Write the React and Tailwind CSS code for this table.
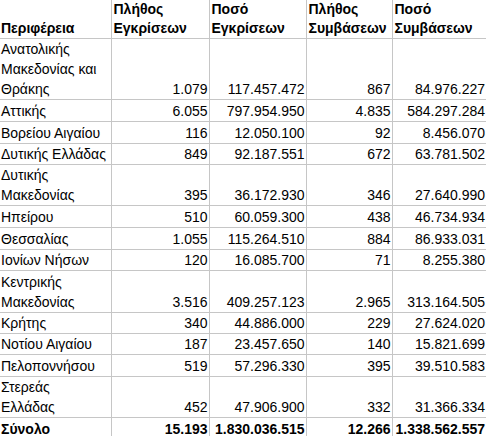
const rows = [
  { name: ['Ανατολικής', 'Μακεδονίας και', 'Θράκης'], h: 'h-[60px]', v: ['1.079', '117.457.472', '867', '84.976.227'] },
  { name: ['Αττικής'], h: 'h-[22px]', v: ['6.055', '797.954.950', '4.835', '584.297.284'] },
  { name: ['Βορείου Αιγαίου'], h: 'h-[22px]', v: ['116', '12.050.100', '92', '8.456.070'] },
  { name: ['Δυτικής Ελλάδας'], h: 'h-[21px]', v: ['849', '92.187.551', '672', '63.781.502'] },
  { name: ['Δυτικής', 'Μακεδονίας'], h: 'h-[41px]', v: ['395', '36.172.930', '346', '27.640.990'] },
  { name: ['Ηπείρου'], h: 'h-[22px]', v: ['510', '60.059.300', '438', '46.734.934'] },
  { name: ['Θεσσαλίας'], h: 'h-[22px]', v: ['1.055', '115.264.510', '884', '86.933.031'] },
  { name: ['Ιονίων Νήσων'], h: 'h-[21px]', v: ['120', '16.085.700', '71', '8.255.380'] },
  { name: ['Κεντρικής', 'Μακεδονίας'], h: 'h-[42px]', v: ['3.516', '409.257.123', '2.965', '313.164.505'] },
  { name: ['Κρήτης'], h: 'h-[21px]', v: ['340', '44.886.000', '229', '27.624.020'] },
  { name: ['Νοτίου Αιγαίου'], h: 'h-[21px]', v: ['187', '23.457.650', '140', '15.821.699'] },
  { name: ['Πελοποννήσου'], h: 'h-[22px]', v: ['519', '57.296.330', '395', '39.510.583'] },
  { name: ['Στερεάς', 'Ελλάδας'], h: 'h-[40px]', v: ['452', '47.906.900', '332', '31.366.334'] },
];

const headers = [
  ['Περιφέρεια'],
  ['Πλήθος', 'Εγκρίσεων'],
  ['Ποσό', 'Εγκρίσεων'],
  ['Πλήθος', 'Συμβάσεων'],
  ['Ποσό', 'Συμβάσεων'],
];

function Lines({ lines }) {
  return lines.map((l, i) => (
    <div key={i} className="whitespace-nowrap">
      {l}
    </div>
  ));
}

export default function App() {
  return (
    <div className="w-[486px] h-[436px] overflow-hidden bg-white text-black font-['Liberation_Sans',sans-serif] text-[14px] leading-[20px]">
      <table className="table-fixed border-collapse w-[486px]">
        <colgroup>
          <col className="w-[111px]" />
          <col className="w-[98px]" />
          <col className="w-[97px]" />
          <col className="w-[86px]" />
          <col className="w-[94px]" />
        </colgroup>
        <thead>
          <tr className="h-[38px]">
            {headers.map((h, i) => (
              <th
                key={i}
                className={`align-bottom text-left font-bold border-b border-[#c6c6c6] ${i < 4 ? 'border-r' : ''} ${i === 0 ? 'pl-[1px]' : 'pl-[2px]'} pb-0 leading-[19px]`}
              >
                <Lines lines={h} />
              </th>
            ))}
          </tr>
        </thead>
        <tbody>
          {rows.map((r, ri) => (
            <tr key={ri} className={r.h}>
              <td className="align-bottom pl-[1px] border-b border-r border-[#c6c6c6]">
                <Lines lines={r.name} />
              </td>
              {r.v.map((v, i) => (
                <td
                  key={i}
                  className={`align-bottom text-right pr-[1px] border-b border-[#c6c6c6] ${i < 3 ? 'border-r' : ''}`}
                >
                  {v}
                </td>
              ))}
            </tr>
          ))}
          <tr className="h-[21px] font-bold">
            <td className="align-bottom pl-[1px] border-r border-[#c6c6c6]">Σύνολο</td>
            <td className="align-bottom text-right pr-[1px] border-r border-[#c6c6c6]">15.193</td>
            <td className="align-bottom text-right pr-[1px] border-r border-[#c6c6c6]">1.830.036.515</td>
            <td className="align-bottom text-right pr-[1px] border-r border-[#c6c6c6]">12.266</td>
            <td className="align-bottom text-right pr-[1px]">1.338.562.557</td>
          </tr>
        </tbody>
      </table>
    </div>
  );
}
